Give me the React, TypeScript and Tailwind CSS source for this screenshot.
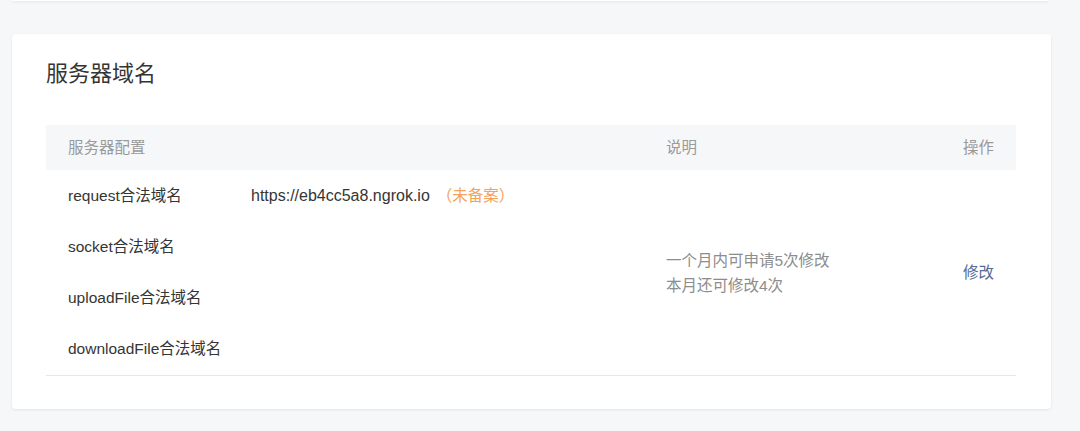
import React from 'react';

const rows = ['request合法域名', 'socket合法域名', 'uploadFile合法域名', 'downloadFile合法域名'];

const App: React.FC = () => {
    return (
        <div
            className="w-[1080px] h-[431px] overflow-hidden bg-[#f6f7f9] text-[#353535]"
            style={{ fontFamily: '"Liberation Sans", "Noto Sans CJK SC", sans-serif' }}
        >
            {/* previous card edge */}
            <div className="ml-[13px] w-[1035px] h-[1px] bg-white shadow-[0_1px_3px_rgba(0,0,0,0.14)]" />

            {/* Card */}
            <div className="mt-[33px] ml-[12px] w-[1039px] h-[375px] bg-white rounded-[4px] shadow-[0_1px_3px_rgba(0,0,0,0.08)] pl-[34px] pt-[25px]">
                <h2 className="text-[22px] leading-[30px] font-normal text-[#353535]">服务器域名</h2>

                <div className="mt-[36px] w-[970px] text-[15.5px]">
                    {/* Header */}
                    <div className="flex items-center h-[45px] bg-[#f6f7f9] text-[#9a9a9a]">
                        <div className="w-[620px] pl-[22px]">服务器配置</div>
                        <div className="flex-1">说明</div>
                        <div className="pr-[22px]">操作</div>
                    </div>

                    {/* Body */}
                    <div className="flex border-b border-[#e7e7eb]">
                        <div className="w-[620px] pb-[1px]">
                            {rows.map((name, i) => (
                                <div key={name} className="flex items-center h-[51px]">
                                    <div className="w-[205px] pl-[22px] whitespace-nowrap">{name}</div>
                                    {i === 0 && (
                                        <div className="flex items-center whitespace-nowrap">
                                            <span className="text-[16px]">https://eb4cc5a8.ngrok.io</span>
                                            <span className="ml-[7px] text-[#f5a25a]">（未备案）</span>
                                        </div>
                                    )}
                                </div>
                            ))}
                        </div>
                        <div className="flex-1 flex flex-col justify-center text-[#8d8d8d] leading-[25px]">
                            <div>一个月内可申请5次修改</div>
                            <div>本月还可修改4次</div>
                        </div>
                        <div className="flex items-center pr-[22px]">
                            <a className="text-[#576b95] cursor-pointer">修改</a>
                        </div>
                    </div>
                </div>
            </div>
        </div>
    );
};

export default App;
